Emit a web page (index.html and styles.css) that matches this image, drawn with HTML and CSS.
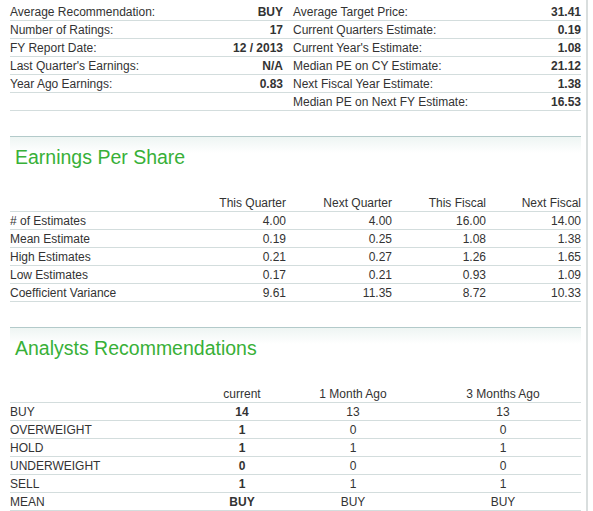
FILE: index.html
```html
<!DOCTYPE html>
<html>
<head>
<meta charset="utf-8">
<link rel="stylesheet" href="styles.css">
</head>
<body>
<div class="wrap">
  <table class="summary">
    <colgroup><col class="c1"><col class="c2"><col class="c3"><col class="c4"></colgroup>
    <tr><td>Average Recommendation:</td><td class="val">BUY</td><td class="lbl2">Average Target Price:</td><td class="val end">31.41</td></tr>
    <tr><td>Number of Ratings:</td><td class="val">17</td><td class="lbl2">Current Quarters Estimate:</td><td class="val end">0.19</td></tr>
    <tr><td>FY Report Date:</td><td class="val">12 / 2013</td><td class="lbl2">Current Year's Estimate:</td><td class="val end">1.08</td></tr>
    <tr><td>Last Quarter's Earnings:</td><td class="val">N/A</td><td class="lbl2">Median PE on CY Estimate:</td><td class="val end">21.12</td></tr>
    <tr><td>Year Ago Earnings:</td><td class="val">0.83</td><td class="lbl2">Next Fiscal Year Estimate:</td><td class="val end">1.38</td></tr>
    <tr><td></td><td class="val"></td><td class="lbl2">Median PE on Next FY Estimate:</td><td class="val end">16.53</td></tr>
  </table>

  <section class="section">
    <div class="sep"></div>
    <h2 class="title">Earnings Per Share</h2>
    <table class="grid eps">
      <colgroup><col class="e1"><col class="e2"><col class="e3"><col class="e4"><col class="e5"></colgroup>
      <tr class="head"><td></td><td>This Quarter</td><td>Next Quarter</td><td>This Fiscal</td><td>Next Fiscal</td></tr>
      <tr><td>&#35; of Estimates</td><td>4.00</td><td>4.00</td><td>16.00</td><td>14.00</td></tr>
      <tr><td>Mean Estimate</td><td>0.19</td><td>0.25</td><td>1.08</td><td>1.38</td></tr>
      <tr><td>High Estimates</td><td>0.21</td><td>0.27</td><td>1.26</td><td>1.65</td></tr>
      <tr><td>Low Estimates</td><td>0.17</td><td>0.21</td><td>0.93</td><td>1.09</td></tr>
      <tr><td>Coefficient Variance</td><td>9.61</td><td>11.35</td><td>8.72</td><td>10.33</td></tr>
    </table>
  </section>

  <section class="section">
    <div class="sep"></div>
    <h2 class="title">Analysts Recommendations</h2>
    <table class="grid rec">
      <colgroup><col class="r1"><col class="r2"><col class="r3"><col class="r4"></colgroup>
      <tr class="head"><td></td><td>current</td><td>1 Month Ago</td><td>3 Months Ago</td></tr>
      <tr><td>BUY</td><td class="b">14</td><td>13</td><td>13</td></tr>
      <tr><td>OVERWEIGHT</td><td class="b">1</td><td>0</td><td>0</td></tr>
      <tr><td>HOLD</td><td class="b">1</td><td>1</td><td>1</td></tr>
      <tr><td>UNDERWEIGHT</td><td class="b">0</td><td>0</td><td>0</td></tr>
      <tr><td>SELL</td><td class="b">1</td><td>1</td><td>1</td></tr>
      <tr><td>MEAN</td><td class="b">BUY</td><td>BUY</td><td>BUY</td></tr>
    </table>
  </section>
</div>
</body>
</html>
```

FILE: styles.css
```css
html, body {
  margin: 0;
  padding: 0;
  background: #fff;
}
body {
  font-family: "Liberation Sans", Arial, sans-serif;
  font-size: 12px;
  color: #333;
}
.wrap {
  width: 571px;
  padding: 3px 5px 0 10px;
  border-right: 2px solid #d9dede;
  min-height: 508px;
}
table {
  border-collapse: collapse;
  table-layout: fixed;
  width: 100%;
}
td {
  height: 17px;
  padding: 0;
  border-bottom: 1px solid #d3dddd;
  line-height: 14px;
  white-space: nowrap;
  vertical-align: middle;
}
.summary .c1 { width: 200px; }
.summary .c2 { width: 78px; }
.summary .c3 { width: 233px; }
.summary .c4 { width: 60px; }
.summary .val {
  text-align: right;
  font-weight: bold;
  padding-right: 5px;
}
.summary .val.end { padding-right: 0; }
.summary .lbl2 { padding-left: 5px; }

.section { margin-top: 25px; }
.sep {
  height: 16px;
  border-top: 1px solid #b3caca;
  background: linear-gradient(#eef5f3, #fff);
}
.title {
  margin: -8px 0 0 5px;
  font-size: 19.5px;
  line-height: 24px;
  font-weight: normal;
  color: #38b038;
}
.grid { margin-top: 25px; }
.eps td { text-align: right; }
.eps td:first-child { text-align: left; }
.eps .e1 { width: 176px; }
.eps .e2 { width: 100px; }
.eps .e3 { width: 106px; }
.eps .e4 { width: 94px; }
.eps .e5 { width: 95px; }

.rec td { text-align: center; }
.rec td:first-child { text-align: left; }
.rec .r1 { width: 193px; }
.rec .r2 { width: 78px; }
.rec .r3 { width: 144px; }
.rec .r4 { width: 156px; }
.rec .b { font-weight: bold; }
```
